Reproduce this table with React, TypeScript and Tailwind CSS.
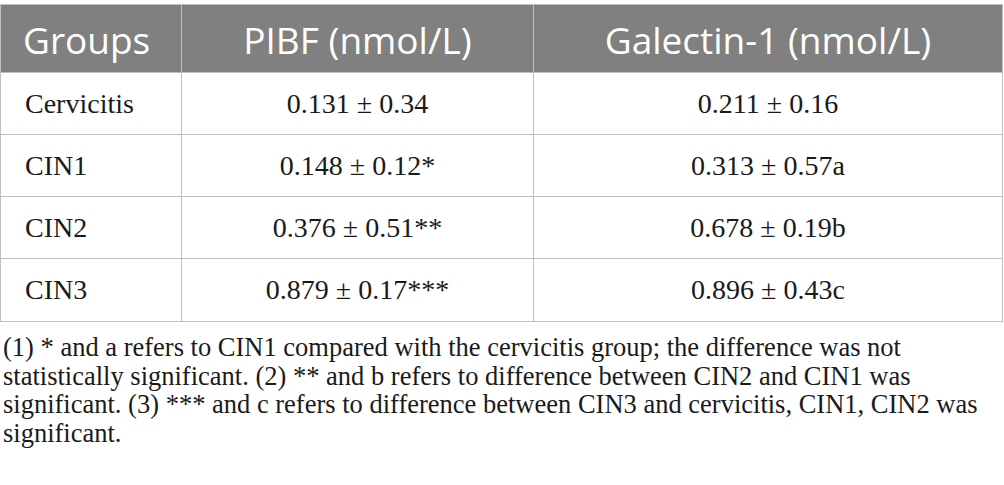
import React from "react";

const rows = [
  ["Cervicitis", "0.131 ± 0.34", "0.211 ± 0.16"],
  ["CIN1", "0.148 ± 0.12*", "0.313 ± 0.57a"],
  ["CIN2", "0.376 ± 0.51**", "0.678 ± 0.19b"],
  ["CIN3", "0.879 ± 0.17***", "0.896 ± 0.43c"],
];

export default function App() {
  return (
    <div className="w-[1004px] h-[485px] bg-white pt-[4px] overflow-hidden">
      <div className="w-[1003px] border border-[#bfbfbf]">
        <div className="flex h-[68px] bg-[#808080] text-white text-[37px] font-['Open_Sans',sans-serif] border-b border-[#bfbfbf]">
          <div className="w-[181px] flex items-center pl-[22px] pt-[3px] border-r border-[#bfbfbf]">Groups</div>
          <div className="w-[352px] flex items-center justify-center pt-[3px] border-r border-[#bfbfbf]">PIBF (nmol/L)</div>
          <div className="flex-1 flex items-center justify-center pt-[3px]">Galectin-1 (nmol/L)</div>
        </div>
        {rows.map((r, i) => (
          <div
            key={r[0]}
            className={`flex h-[62px] text-[28px] text-[#1a1a1a] font-['Liberation_Serif',serif] ${i < rows.length - 1 ? "border-b border-[#bfbfbf]" : ""}`}
          >
            <div className="w-[181px] flex items-center pl-[24px] border-r border-[#bfbfbf]">{r[0]}</div>
            <div className="w-[352px] flex items-center justify-center border-r border-[#bfbfbf]">{r[1]}</div>
            <div className="flex-1 flex items-center justify-center">{r[2]}</div>
          </div>
        ))}
      </div>
      <p className="mt-[11px] pl-[3px] pr-[8px] text-[26.5px] leading-[28.5px] text-[#1a1a1a] font-['Liberation_Serif',serif]">
        (1) * and a refers to CIN1 compared with the cervicitis group; the difference was not statistically significant. (2) ** and b refers to difference between CIN2 and CIN1 was significant. (3) *** and c refers to difference between CIN3 and cervicitis, CIN1, CIN2 was significant.
      </p>
    </div>
  );
}
